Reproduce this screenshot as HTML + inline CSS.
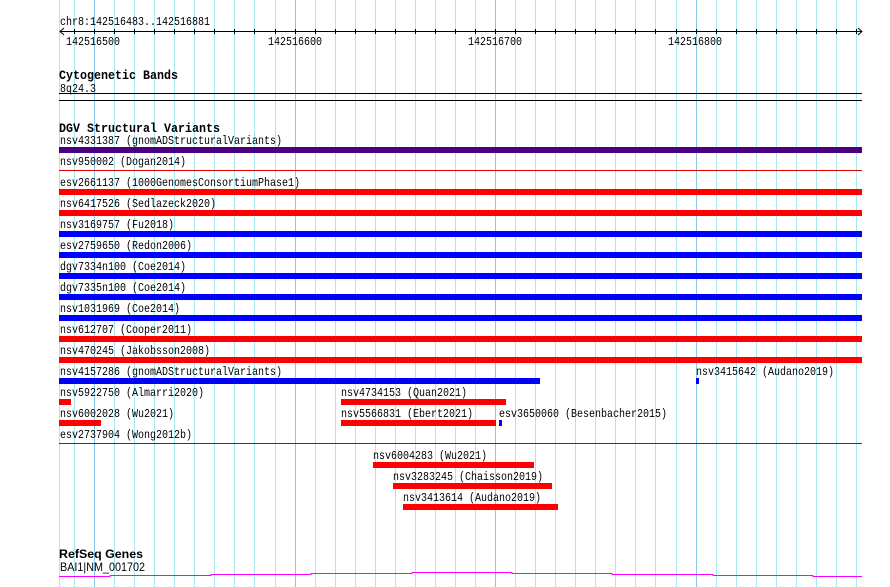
<!DOCTYPE html>
<html><head><meta charset="utf-8"><style>
html,body{margin:0;padding:0;background:#fff;width:890px;height:587px;overflow:hidden}
svg{display:block}
text{font-family:"Liberation Mono",monospace;font-size:12px;fill:#000}
.b{font-weight:bold;font-size:13px}
.s{font-family:"Liberation Sans",sans-serif;font-size:12px}
</style></head><body>
<svg id="s" width="890" height="587" xmlns="http://www.w3.org/2000/svg">
<g id="grid"></g>
<text x="60" y="25" textLength="150" lengthAdjust="spacingAndGlyphs">chr8:142516483..142516881</text>
<line x1="60" y1="31.5" x2="862" y2="31.5" stroke="#000"/>
<path d="M64 28 L60 31.5 L64 35 M858 28 L862 31.5 L858 35" stroke="#000" fill="none"/>
<g id="ticks"></g>
<text x="66" y="45" textLength="54" lengthAdjust="spacingAndGlyphs">142516500</text>
<text x="268" y="45" textLength="54" lengthAdjust="spacingAndGlyphs">142516600</text>
<text x="468" y="45" textLength="54" lengthAdjust="spacingAndGlyphs">142516700</text>
<text x="668" y="45" textLength="54" lengthAdjust="spacingAndGlyphs">142516800</text>
<text class="b" x="59" y="79" textLength="119" lengthAdjust="spacingAndGlyphs">Cytogenetic Bands</text>
<text x="60" y="92" textLength="36" lengthAdjust="spacingAndGlyphs">8q24.3</text>
<rect x="59" y="93" width="803" height="1" fill="#000"/>
<rect x="59" y="100" width="803" height="1" fill="#000"/>
<text class="b" x="59" y="132" textLength="161" lengthAdjust="spacingAndGlyphs">DGV Structural Variants</text>
<g id="rows"></g>
<rect x="59" y="443" width="803" height="1" fill="#c00000"/>
<text class="b s" x="59" y="558" textLength="84" lengthAdjust="spacingAndGlyphs">RefSeq Genes</text>
<text class="s" x="60" y="571" textLength="85" lengthAdjust="spacingAndGlyphs">BAI1|NM_001702</text>
<path d="M59 576.5H110V575.5H211V574.5H311V573.5H412V572.5H512V573.5H612V574.5H713V575.5H813V576.5H862" stroke="#ff00ff" fill="none"/>
</svg>
<script>
var NS="http://www.w3.org/2000/svg";
function el(p,t,a,txt){var e=document.createElementNS(NS,t);for(var k in a)e.setAttribute(k,a[k]);if(txt!=null)e.textContent=txt;document.getElementById(p).appendChild(e);return e;}
el("grid","rect",{x:59,y:0,width:1,height:587,fill:"#a8e8f0"});
for(var i=0;i<40;i++){var x=Math.round(74+20.05*i);if(x>862)break;var d=(i%10==1);
 el("grid","rect",{x:x,y:0,width:1,height:587,fill:d?"#88c8ec":"#a8e8f0"});
 el("ticks","rect",{x:x,y:29,width:1,height:5,fill:"#000"});}
var rows=[
["nsv4331387 (gnomADStructuralVariants)","#4b0082",1],
["nsv950002 (Dogan2014)","#e00000",0],
["esv2661137 (1000GenomesConsortiumPhase1)","#ff0000",1],
["nsv6417526 (Sedlazeck2020)","#ff0000",1],
["nsv3169757 (Fu2018)","#0000ff",1],
["esv2759650 (Redon2006)","#0000ff",1],
["dgv7334n100 (Coe2014)","#0000ff",1],
["dgv7335n100 (Coe2014)","#0000ff",1],
["nsv1031969 (Coe2014)","#0000ff",1],
["nsv612707 (Cooper2011)","#ff0000",1],
["nsv470245 (Jakobsson2008)","#ff0000",1]];
function lab(x,k,t){el("rows","text",{x:x,y:144+21*k,textLength:t.length*6,lengthAdjust:"spacingAndGlyphs"},t);}
function bar(x1,x2,k,c){el("rows","rect",{x:x1,y:147+21*k,width:x2-x1,height:6,fill:c});}
rows.forEach(function(r,k){lab(60,k,r[0]);if(r[2])bar(59,862,k,r[1]);else el("rows","rect",{x:59,y:170,width:803,height:1,fill:r[1]});});
lab(60,11,"nsv4157286 (gnomADStructuralVariants)");bar(59,540,11,"#0000ff");
lab(696,11,"nsv3415642 (Audano2019)");bar(696,699,11,"#0000ff");
lab(60,12,"nsv5922750 (Almarri2020)");bar(59,71,12,"#ff0000");
lab(341,12,"nsv4734153 (Quan2021)");bar(341,506,12,"#ff0000");
lab(60,13,"nsv6002028 (Wu2021)");bar(59,101,13,"#ff0000");
lab(341,13,"nsv5566831 (Ebert2021)");bar(341,496,13,"#ff0000");
lab(499,13,"esv3650060 (Besenbacher2015)");bar(499,502,13,"#0000ff");
lab(60,14,"esv2737904 (Wong2012b)");
lab(373,15,"nsv6004283 (Wu2021)");bar(373,534,15,"#ff0000");
lab(393,16,"nsv3283245 (Chaisson2019)");bar(393,552,16,"#ff0000");
lab(403,17,"nsv3413614 (Audano2019)");bar(403,558,17,"#ff0000");
</script>
</body></html>
